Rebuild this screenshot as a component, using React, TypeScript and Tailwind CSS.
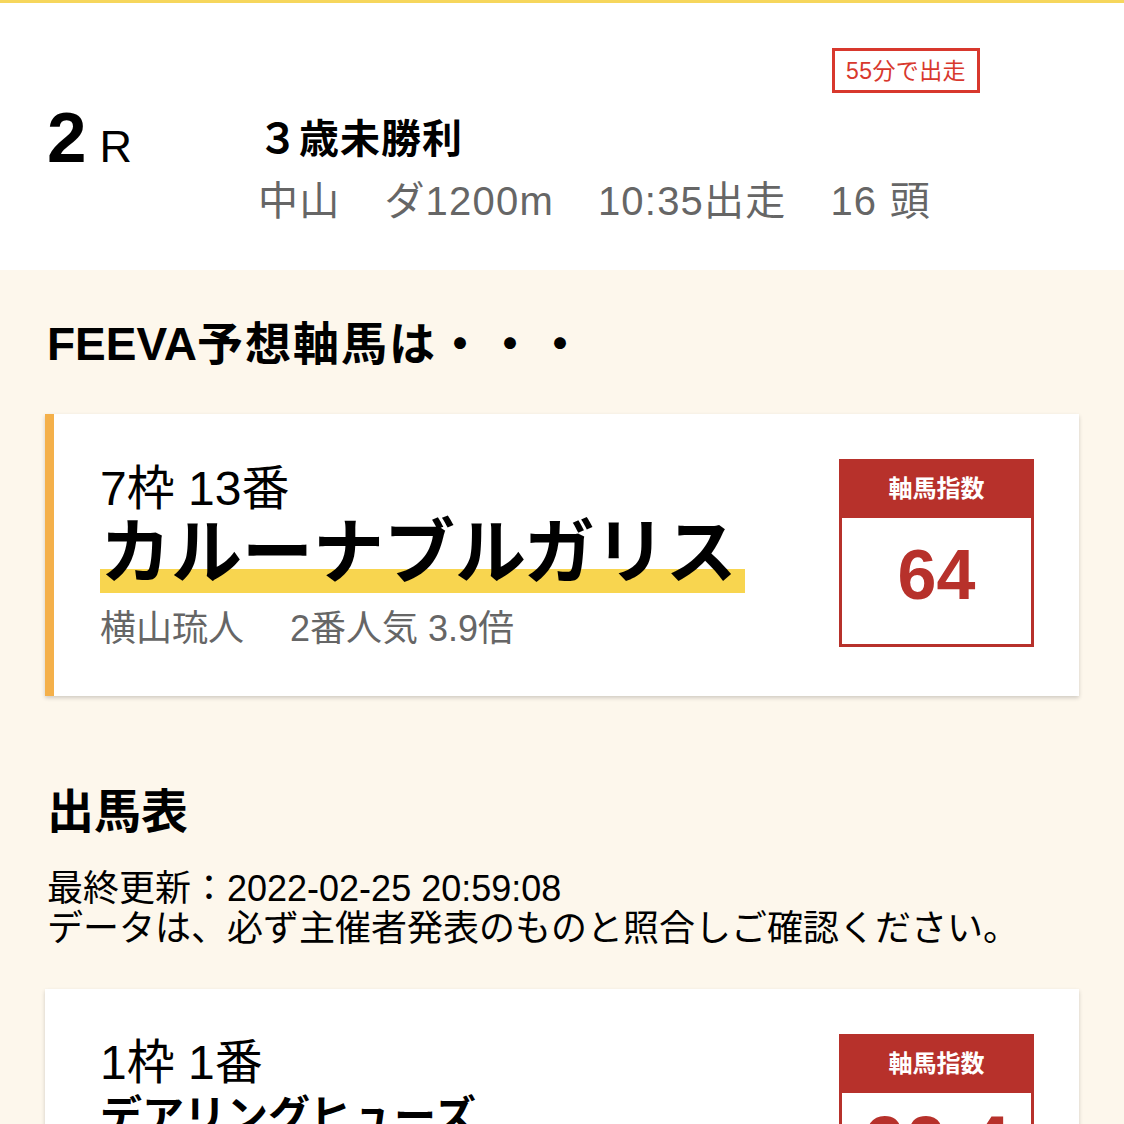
import React from "react";

const FONT = '"Liberation Sans", "Noto Sans CJK JP", sans-serif';

function IndexBox({ value, big }: { value: string; big?: boolean }) {
  return (
    <div className="w-[195px] h-[188px] flex flex-col shrink-0">
      <div className="h-[59px] bg-[#b7312b] flex items-center justify-center text-white font-bold text-[24px] leading-[30px]">
        軸馬指数
      </div>
      <div className="flex-1 bg-white border-[3px] border-t-0 border-[#b7312b] flex justify-center">
        <div
          className={
            big
              ? "pt-[12px] text-[#b7312b] font-bold text-[76px] leading-[76px]"
              : "pt-[21px] text-[#b7312b] font-bold text-[70px] leading-[72px]"
          }
        >
          {value}
        </div>
      </div>
    </div>
  );
}

export default function App() {
  return (
    <div className="w-[1124px] h-[1124px] overflow-hidden bg-[#fdf7ec] text-black" style={{ fontFamily: FONT }}>
      {/* Header */}
      <div className="h-[270px] bg-white border-t-[3px] border-[#f6d65c] pt-[45px]">
        <div className="flex justify-end pr-[144px]">
          <div className="h-[45px] border-[3px] border-[#d8382d] px-[11px] flex items-center text-[#d8382d] text-[23px] leading-[28px] tracking-[0.4px]">
            55分で出走
          </div>
        </div>
        <div className="flex pl-[47px]">
          <div className="w-[211px] flex items-baseline mt-[9px]">
            <span className="text-[71px] leading-[71px] font-bold">2</span>
            <span className="text-[45px] leading-[71px] ml-[13px]">R</span>
          </div>
          <div className="mt-[20px]">
            <div className="text-[40px] leading-[52px] font-bold tracking-[1px]">３歳未勝利</div>
            <div className="mt-[10px] flex gap-[44px] text-[40px] leading-[52px] text-[#666666] tracking-[1.2px]">
              <span>中山</span>
              <span>ダ1200m</span>
              <span>10:35出走</span>
              <span>16 頭</span>
            </div>
          </div>
        </div>
      </div>

      {/* Main */}
      <div className="pt-[46px] px-[45px]">
        <div className="pl-[2px] text-[46px] leading-[56px] font-bold">
          FEEVA<span className="tracking-[2px]">予想軸馬は</span>
          <span className="tracking-[4px]">・・・</span>
        </div>

        {/* Featured card */}
        <div className="mt-[42px] bg-white border-l-[9px] border-[#f4b04a] shadow-[0_2px_4px_rgba(0,0,0,0.18)] pl-[46px] pr-[45px] py-[45px] flex items-start justify-between">
          <div className="mt-[4px]">
            <div className="text-[48px] leading-[52px]">7枠 13番</div>
            <div className="w-fit pr-[8px] pb-[2px] text-[71px] leading-[76px] font-bold bg-[linear-gradient(to_bottom,transparent_54px,#f8d54f_54px)]">
              カルーナブルガリス
            </div>
            <div className="mt-[14px] text-[36px] leading-[44px] text-[#666666] whitespace-pre">
              横山琉人　 2番人気 3.9倍
            </div>
          </div>
          <IndexBox value="64" />
        </div>

        {/* Race card title */}
        <div className="mt-[88px] pl-[2px] text-[47px] leading-[56px] font-bold">出馬表</div>
        <div className="mt-[29px] pl-[2px] text-[36px] leading-[40px]">
          <div>最終更新：2022-02-25 20:59:08</div>
          <div>データは、必ず主催者発表のものと照合しご確認ください。</div>
        </div>

        {/* Entry card */}
        <div className="mt-[40px] bg-white shadow-[0_2px_4px_rgba(0,0,0,0.18)] pl-[55px] pr-[45px] py-[45px] flex items-start justify-between">
          <div className="mt-[3px]">
            <div className="text-[48px] leading-[52px]">1枠 1番</div>
            <div className="mt-[2px] text-[42px] leading-[52px] font-bold">デアリングヒューズ</div>
            <div className="mt-[14px] text-[36px] leading-[44px] text-[#666666] whitespace-pre">
              横山武史　 1番人気 2.1倍
            </div>
          </div>
          <IndexBox value="60.4" big />
        </div>
      </div>
    </div>
  );
}
